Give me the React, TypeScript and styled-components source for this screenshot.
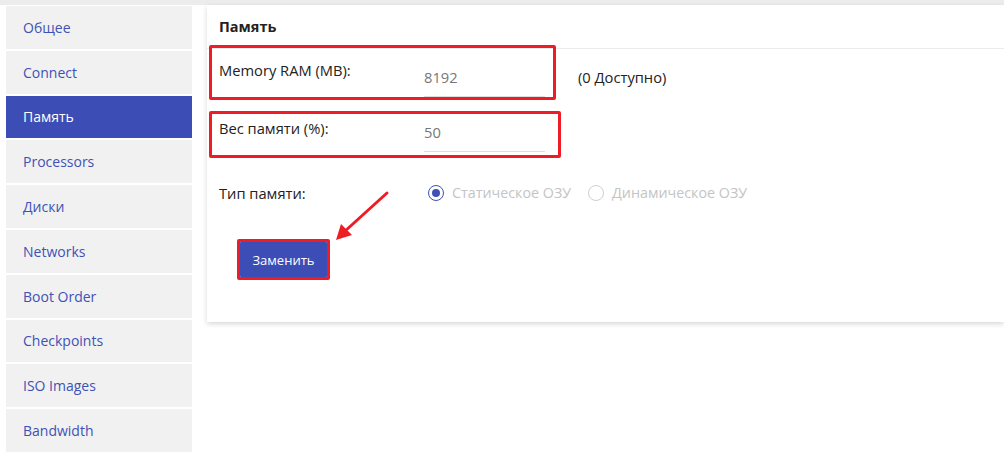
import React from "react";
import styled, {createGlobalStyle} from "styled-components";

const GlobalStyle = createGlobalStyle`
  html, body {
    margin: 0;
    padding: 0;
    background: #FFFFFF;
  }
  body {
    font-family: "Open Sans", "Noto Sans", sans-serif;
    color: #222222;
    overflow: hidden;
  }
`;

const Page = styled.div`
  position: relative;
  display: flex;
  align-items: flex-start;
  gap: 15px;
  width: 1004px;
  height: 465px;
  padding: 5px 0 0 6px;
  box-sizing: border-box;
  background: linear-gradient(#ececec 0, #ececec 5px, #FFFFFF 5px);
`;
const Sidebar = styled.nav`
  display: flex;
  flex-direction: column;
  gap: 2px;
  width: 186px;
  margin-top: 1px;
  background: #FFFFFF;
`;
const NavItem = styled.div<{ $active?: boolean }>`
  display: flex;
  align-items: center;
  height: 42.8px;
  padding: 0 0 0 17px;

  font-size: 14px;
  color: ${p => p.$active ? '#FFFFFF' : '#3f51b5'};
  background: ${p => p.$active ? '#3d4db6' : '#f1f1f1'};
`;
const Panel = styled.section`
  flex: 1;
  height: 317px;
  background: #FFFFFF;
  box-shadow: 0 2px 5px rgba(0, 0, 0, .16);
`;
const PanelHead = styled.h2`
  height: 43px;
  margin: 0;
  padding: 0 0 0 12px;
  display: flex;
  align-items: center;

  font-size: 14.5px;
  font-weight: 700;
  color: #222222;
  border-bottom: 1px solid #ececec;
`;
const PanelBody = styled.div`
  display: flex;
  flex-direction: column;
  padding: 0 0 0 2px;
  margin-top: -4px;
`;
const Row = styled.div<{ $gap?: number }>`
  display: flex;
  align-items: flex-start;
  margin-top: ${p => p.$gap || 0}px;
`;
const Highlight = styled.div<{ $w: number; $h: number; $top: number; $bottom: number }>`
  display: flex;
  align-items: flex-start;
  justify-content: space-between;
  width: ${p => p.$w}px;
  height: ${p => p.$h}px;
  padding: ${p => p.$top}px ${p => p.$w - 6 - 7 - 205 - 121}px 0 7px;
  box-sizing: border-box;

  border: 3px solid #ee1c25;
  border-radius: 2px;

  & > div:last-child {
    align-self: flex-end;
    margin-bottom: ${p => p.$bottom}px;
  }
`;
const Label = styled.div`
  width: 205px;
  flex-shrink: 0;
  font-size: 14.7px;
  line-height: 18px;
  color: #222222;
`;
const Field = styled.div`
  width: 121px;
  flex-shrink: 0;
  padding: 6px 0 10px 0;
  font-size: 14.7px;
  line-height: 18px;
  color: #777777;
  border-bottom: 1px solid #dddddd;
`;
const Note = styled.div`
  margin: 23px 0 0 22px;
  font-size: 14.7px;
  line-height: 18px;
  color: #222222;
`;
const TypeRow = styled.div`
  display: flex;
  align-items: center;
  margin: 25px 0 0 10px;
`;
const RadioGroup = styled.div`
  display: flex;
  align-items: center;
  gap: 17px;
  padding-left: 4px;
`;
const RadioItem = styled.label`
  display: flex;
  align-items: center;
  gap: 8px;
  font-size: 14.3px;
  color: #c4c4c4;
`;
const RadioDot = styled.span<{ $checked?: boolean }>`
  position: relative;
  width: 16px;
  height: 16px;
  box-sizing: border-box;
  border-radius: 50%;
  border: 1px solid ${p => p.$checked ? '#3f51b5' : '#cfcfcf'};

  &::after {
    content: '';
    display: ${p => p.$checked ? 'block' : 'none'};
    position: absolute;
    top: 3px;
    left: 3px;
    width: 8px;
    height: 8px;
    border-radius: 50%;
    background: #3f51b5;
  }
`;
const ButtonFrame = styled.div`
  align-self: flex-start;
  margin: 37px 0 0 28px;
  border: 3px solid #ee1c25;
  border-radius: 2px;
`;
const Button = styled.button`
  display: block;
  width: 87px;
  height: 35px;
  padding: 0;

  font-family: "Open Sans", "Noto Sans", sans-serif;
  font-size: 13px;
  color: #FFFFFF;
  background: #3d4db6;
  border: none;
  border-radius: 1px;
`;
const Arrow = styled.svg`
  position: absolute;
  left: 330px;
  top: 188px;
  width: 64px;
  height: 58px;
  pointer-events: none;
`;

const navItems = ['Общее', 'Connect', 'Память', 'Processors', 'Диски', 'Networks', 'Boot Order', 'Checkpoints', 'ISO Images', 'Bandwidth'];

export default function App() {
  return (
    <>
      <GlobalStyle/>
      <Page>
        <Sidebar>
          {navItems.map(item => (
            <NavItem key={item} $active={item === 'Память'}>{item}</NavItem>
          ))}
        </Sidebar>
        <Panel>
          <PanelHead>Память</PanelHead>
          <PanelBody>
            <Row>
              <Highlight $w={347} $h={55} $top={13} $bottom={0}>
                <Label>Memory RAM (MB):</Label>
                <Field>8192</Field>
              </Highlight>
              <Note>(0 Доступно)</Note>
            </Row>
            <Row $gap={11}>
              <Highlight $w={352} $h={47} $top={5} $bottom={3}>
                <Label>Вес памяти (%):</Label>
                <Field>50</Field>
              </Highlight>
            </Row>
            <TypeRow>
              <Label>Тип памяти:</Label>
              <RadioGroup>
                <RadioItem><RadioDot $checked/>Статическое ОЗУ</RadioItem>
                <RadioItem><RadioDot/>Динамическое ОЗУ</RadioItem>
              </RadioGroup>
            </TypeRow>
            <ButtonFrame>
              <Button>Заменить</Button>
            </ButtonFrame>
          </PanelBody>
        </Panel>
        <Arrow viewBox="0 0 64 58">
          <line x1="57" y1="5" x2="14" y2="44" stroke="#ee1c25" strokeWidth="3" strokeLinecap="round"/>
          <polygon points="6,52 11,36 22,47" fill="#ee1c25"/>
        </Arrow>
      </Page>
    </>
  );
}
